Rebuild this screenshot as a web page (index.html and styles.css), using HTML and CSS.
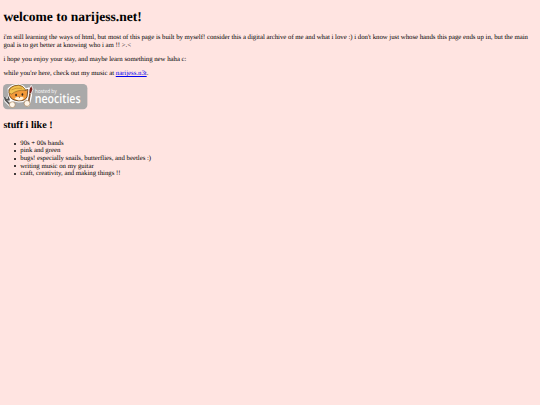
FILE: index.html
```html
<!DOCTYPE html>
<html lang="en">
<head>
    <meta charset="UTF-8">
    <meta name="viewport" content="width=device-width, initial-scale=1.0">
    <title>narijess.net</title>
    <link rel="stylesheet" href="styles.css">
</head>
<body>
    <h1>welcome to narijess.net!</h1>

    <p>i'm still learning the ways of html, but most of this page is built by myself! consider this a digital archive of me and what i love :) i don't know just whose hands this page ends up in, but the main goal is to get better at knowing who i am !! &gt;.&lt;</p>
    <p>i hope you enjoy your stay, and maybe learn something new haha c:</p>
    <p>while you're here, check out my music at <a href="#">narijess.n3t</a>.</p>

    <a class="badge-link" href="#">
        <svg class="badge" viewBox="0 0 200 60">
            <rect width="200" height="60" rx="10" fill="#a9a9a9"/>

            <!-- paintbrush -->
            <path d="M64 26 L59 48" stroke="#fff" stroke-width="10" stroke-linecap="round"/>
            <path d="M67 3 L71 12 L67 23 L61 22 L62 12 Z" fill="#7d211c" stroke="#fff" stroke-width="2"/>
            <path d="M64 22 L60 46" stroke="#85512b" stroke-width="4"/>

            <!-- wrench -->
            <path d="M4 31 L6 39 L17 50 L23 45 L14 35 L13 29" fill="none" stroke="#fff" stroke-width="7" stroke-linejoin="round"/>
            <path d="M4 31 L6 38 L17 49 M13 29 L14 37 L7 37" fill="none" stroke="#555" stroke-width="4"/>

            <!-- cat -->
            <path d="M15 27 L14 12 Q22 2 38 3 Q50 5 52 14 L59 12 L57 30 Q54 41 37 41 Q20 40 15 27 Z" fill="#f29a3a" stroke="#fff" stroke-width="6"/>
            <path d="M15 27 L14 13 Q22 3 38 3 Q50 6 52 15 L59 13 L57 30 Q54 40 37 40 Q20 39 15 27 Z" fill="#f29a3a" stroke="#59391f" stroke-width="2"/>
            <path d="M14 21 Q15 4 37 3 Q50 5 54 15 Q34 13 20 24 Z" fill="#f4c451" stroke="#8b5f25" stroke-width="1.5"/>
            <path d="M20 14 Q30 8 45 10" fill="none" stroke="#b47d2b" stroke-width="1.5"/>
            <path d="M27 34 Q33 30 38 31 Q44 29 50 33 Q46 39 38 39 Q31 39 27 34 Z" fill="#fff3dc"/>
            <ellipse cx="31" cy="26" rx="2" ry="3" fill="#34251c"/>
            <ellipse cx="46" cy="25" rx="2" ry="3" fill="#34251c"/>
            <path d="M37 30 L41 30 L39 33 Z" fill="#6c3526"/>

            <!-- paws -->
            <circle cx="22" cy="49" r="7" fill="#fff5e8" stroke="#a07a50" stroke-width="1.5"/>
            <circle cx="57" cy="46" r="7" fill="#fff5e8" stroke="#a07a50" stroke-width="1.5"/>

            <text class="badge-small" x="76" y="22" textLength="51" lengthAdjust="spacingAndGlyphs">hosted by</text>
            <text class="badge-name" x="75" y="46" textLength="109" lengthAdjust="spacingAndGlyphs">neocities</text>
        </svg>
    </a>

    <h2>stuff i like !</h2>
    <ul>
        <li>90s + 00s bands</li>
        <li>pink and green</li>
        <li>bugs! especially snails, butterflies, and beetles :)</li>
        <li>writing music on my guitar</li>
        <li>craft, creativity, and making things !!</li>
    </ul>
</body>
</html>
```
FILE: styles.css
```css
body {
    background-color: #ffe4e1;
    color: #000;
    font-family: "Liberation Serif", "Times New Roman", serif;
    font-size: 6.75px;
    line-height: 1.125;
    margin: 0 0.5em;
    padding-top: 0.06em;
    text-rendering: geometricPrecision;
}

h1 {
    font-size: 2em;
    line-height: 1.156;
    margin: 0.67em 0;
}

h2 {
    font-size: 1.5em;
    margin: 0.83em 0;
}

p {
    margin: 1em 0;
}

a {
    color: #0000ee;
}

ul {
    list-style: none;
    margin: 1em 0;
    padding-left: 2.5em;
}

li {
    display: flex;
    align-items: center;
}

li::before {
    content: "";
    width: 2px;
    height: 2px;
    margin-left: -6px;
    margin-right: 4px;
    border-radius: 50%;
    background-color: #000;
}

.badge-link {
    display: block;
    margin-top: -0.1em;
    padding-bottom: 0.35em;
}

.badge {
    display: block;
    width: 12.5em;
    height: 3.75em;
    overflow: visible;
}

.badge text {
    fill: #fff;
    font-family: "Open Sans", "Noto Sans", sans-serif;
}

.badge-small {
    font-size: 13px;
}

.badge-name {
    font-size: 30px;
    font-weight: 600;
}
```
